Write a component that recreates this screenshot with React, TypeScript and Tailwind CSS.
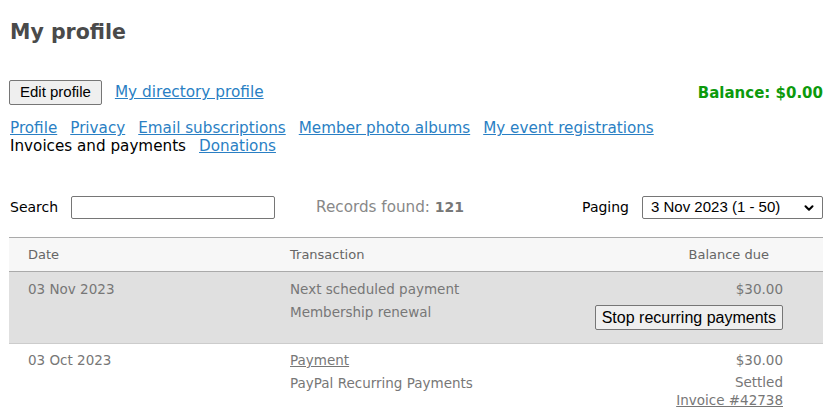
import React from 'react';
import { ChevronDown } from 'lucide-react';

const TABS = ['Profile', 'Privacy', 'Email subscriptions', 'Member photo albums', 'My event registrations'];

export default function App() {
  return (
    <div className="w-[831px] h-[412px] overflow-hidden bg-white font-['DejaVu_Sans',Verdana,sans-serif] text-black">
      <div className="pl-[10px] pr-[8px]">
        <h1 className="pt-[19px] text-[20.5px] leading-[26px] font-bold text-[#4a4a4a]">My profile</h1>

        {/* Buttons + balance */}
        <div className="mt-[35px] flex items-center justify-between">
          <div className="flex items-center gap-[13px]">
            <button className="-ml-px h-[25px] px-[10px] border border-[#767676] rounded-[2px] bg-[#efefef] font-['Liberation_Sans',Arial,sans-serif] text-[15px]">
              Edit profile
            </button>
            <a href="#" className="text-[15.3px] text-[#2a7fc4] underline">My directory profile</a>
          </div>
          <span className="text-[15px] font-bold text-[#0c9a0c] pt-[2px]">Balance: $0.00</span>
        </div>

        {/* Tabs */}
        <div className="mt-[14px] text-[15.2px] leading-[18px]">
          <div className="flex gap-[13px]">
            {TABS.map(t => (
              <a key={t} href="#" className="text-[#2a7fc4] underline">{t}</a>
            ))}
          </div>
          <div className="flex gap-[13px]">
            <span>Invoices and payments</span>
            <a href="#" className="text-[#2a7fc4] underline">Donations</a>
          </div>
        </div>

        {/* Search row */}
        <div className="mt-[41px] flex items-center text-[14px]">
          <span>Search</span>
          <input className="ml-[13px] w-[204px] h-[23px] border border-[#767676] rounded-[2px]" />
          <span className="ml-[41px] text-[15.2px] text-[#888]">
            Records found: <b className="text-[14px] text-[#777]">121</b>
          </span>
          <span className="ml-auto">Paging</span>
          <div className="ml-[13px] w-[181px] h-[23px] border border-[#767676] rounded-[2px] flex items-center justify-between pl-[8px] pr-[6px] font-['Liberation_Sans',Arial,sans-serif] text-[15px]">
            <span>3 Nov 2023 (1 - 50)</span>
            <ChevronDown size={14} strokeWidth={3.5} />
          </div>
        </div>
      </div>

      {/* Table */}
      <div className="mt-[18px] ml-[9px] w-[814px] text-[13.5px] text-[#777]">
        <div className="flex h-[35px] items-center bg-[#f7f7f7] border-t border-b border-[#aaa] text-[13px] text-[#666]">
          <div className="w-[281px] pl-[19px]">Date</div>
          <div className="flex-1">Transaction</div>
          <div className="pr-[54px]">Balance due</div>
        </div>

        <div className="flex bg-[#e0e0e0] border-b border-[#ccc] pt-[6px] h-[72px] leading-[23px]">
          <div className="w-[281px] pl-[19px]">03 Nov 2023</div>
          <div className="flex-1">
            <div>Next scheduled payment</div>
            <div>Membership renewal</div>
          </div>
          <div className="pr-[40px] flex flex-col items-end">
            <div>$30.00</div>
            <button className="mt-[4px] h-[25px] px-[6px] border border-[#767676] rounded-[2px] bg-[#efefef] text-black font-['Liberation_Sans',Arial,sans-serif] text-[16px] leading-[20px]">
              Stop recurring payments
            </button>
          </div>
        </div>

        <div className="flex pt-[5px] leading-[23px]">
          <div className="w-[281px] pl-[19px]">03 Oct 2023</div>
          <div className="flex-1">
            <div><a href="#" className="underline">Payment</a></div>
            <div>PayPal Recurring Payments</div>
          </div>
          <div className="pr-[40px] flex flex-col items-end">
            <div>$30.00</div>
            <div className="leading-[20px]">Settled</div>
            <a href="#" className="underline leading-[17px]">Invoice #42738</a>
          </div>
        </div>
      </div>
    </div>
  );
}
